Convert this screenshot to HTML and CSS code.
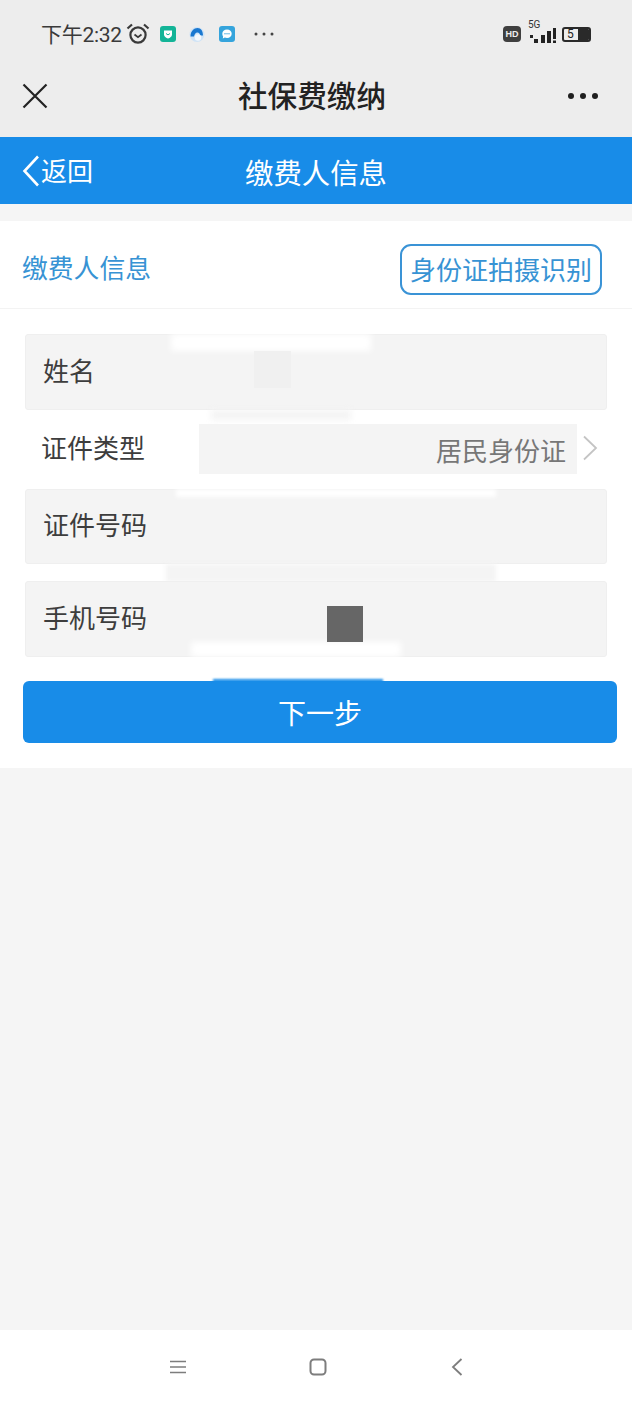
FILE: index.html
```html
<!DOCTYPE html>
<html lang="zh-CN">
<head>
<meta charset="utf-8">
<title>社保费缴纳</title>
<link rel="stylesheet" href="styles.css">
</head>
<body>
<div class="phone">
  <div class="top">
    <div class="status">
      <div class="status-left">
        <span class="time">下午2:32</span>
        <svg class="alarm" width="24" height="24" viewBox="0 0 24 24" fill="none" stroke="#3a3a3a"><circle cx="12" cy="13" r="7.6" stroke-width="2.2"/><path d="M8.5 12.5l3.5 2.6 3.5-2.6" stroke-width="1.8"/><path d="M1.5 6.5L6 2.5M22.500 6.500L18 2.500" stroke-width="2.2"/></svg>
        <svg class="app app-green" width="16" height="16" viewBox="0 0 16 16"><rect width="16" height="16" rx="3" fill="#13b497"/><path d="M4 4.500h8v4c0 2-2 3.400-4 4-2-.6-4-2-4-4z" fill="#fff"/><path d="M6 7.500l2 1.400 2-1.400" stroke="#13b497" stroke-width="1" fill="none"/></svg>
        <svg class="app app-blue" width="16" height="16" viewBox="0 0 16 16"><circle cx="8" cy="8.500" r="7.500" fill="#cfe3f6"/><path d="M1.500 10.500C1.500 5 5 2 8.500 2c3.500 0 5.500 3 5.500 7.500h-3C11 7.500 9.800 6.500 8.500 6.500 6.500 6.500 5.500 8.500 5 10.500z" fill="#1a78d0"/><circle cx="9" cy="11.500" r="3.200" fill="#f4f8fc"/></svg>
        <svg class="app app-chat" width="16" height="16" viewBox="0 0 16 16"><rect width="16" height="16" rx="3" fill="#35a4dc"/><path d="M8 3.500c2.800 0 4.700 1.800 4.700 4.200S10.800 12 8 12c-.8 0-1.500-.1-2.200-.4L3.800 12.500l.3-2C3.500 9.700 3.300 8.700 3.300 7.700 3.300 5.300 5.200 3.500 8 3.500z" fill="#fff"/><circle cx="6" cy="7.700" r=".7" fill="#35a4dc"/><circle cx="8" cy="7.700" r=".7" fill="#35a4dc"/><circle cx="10" cy="7.700" r=".7" fill="#35a4dc"/></svg>
        <svg class="more-small" width="20" height="4" viewBox="0 0 20 4" fill="#444"><circle cx="2" cy="2" r="1.500"/><circle cx="10" cy="2" r="1.500"/><circle cx="18" cy="2" r="1.500"/></svg>
      </div>
      <div class="status-right">
        <span class="hd">HD</span>
        <span class="signal">
          <span class="fiveg">5G</span>
          <svg width="28" height="17" viewBox="0 0 28 17" fill="#222"><rect x="1" y="8" width="3" height="3"/><rect x="5" y="12" width="4" height="4"/><rect x="12" y="8" width="4" height="8"/><rect x="18" y="4" width="4" height="12"/><rect x="24" y="1" width="3" height="11"/><rect x="24" y="13.500" width="3" height="2.500"/></svg>
        </span>
        <span class="battery"><span class="battery-num">5</span><span class="battery-fill"></span></span>
      </div>
    </div>
    <div class="navbar">
      <svg class="close" width="26" height="26" viewBox="0 0 26 26" stroke="#222" stroke-width="2.200"><path d="M1.500 1.500l23 23M24.500 1.500l-23 23"/></svg>
      <h1 class="nav-title">社保费缴纳</h1>
      <svg class="more" width="32" height="8" viewBox="0 0 32 8" fill="#1f1f1f"><circle cx="4" cy="4" r="3"/><circle cx="16" cy="4" r="3"/><circle cx="28" cy="4" r="3"/></svg>
    </div>
  </div>

  <div class="bluebar">
    <div class="back">
      <svg width="18" height="32" viewBox="0 0 18 32" fill="none" stroke="#fff" stroke-width="2.600"><path d="M16 1.500L2.500 16 16 30.500"/></svg>
      <span>返回</span>
    </div>
    <div class="bar-title">缴费人信息</div>
  </div>

  <main class="main">
    <section class="card">
      <div class="card-head">
        <span class="card-title">缴费人信息</span>
        <button class="scan">身份证拍摄识别</button>
      </div>
      <div class="form">
        <div class="field field-name">
          <span>姓名</span>
          <i class="patch patch-name-top"></i>
          <i class="patch patch-name-mark"></i>
          <i class="patch patch-name-bottom"></i>
        </div>
        <div class="row">
          <span class="row-label">证件类型</span>
          <div class="row-value">
            <span>居民身份证</span>
          </div>
          <svg class="chev" width="16" height="26" viewBox="0 0 16 26" fill="none" stroke="#c4c4c4" stroke-width="1.800"><path d="M2 1.500L14 13 2 24.500"/></svg>
        </div>
        <div class="field field-id">
          <span>证件号码</span>
          <i class="patch patch-id-top"></i>
          <i class="patch patch-id-bottom"></i>
        </div>
        <div class="field field-phone">
          <span>手机号码</span>
          <i class="patch patch-phone-mark"></i>
          <i class="patch patch-phone-bottom"></i>
        </div>
        <button class="next">下一步<i class="patch patch-next"></i></button>
      </div>
    </section>
  </main>

  <footer class="sysnav">
    <svg width="18" height="14" viewBox="0 0 18 14" stroke="#7d7d7d" stroke-width="1.700"><path d="M1 1.500h16M1 7h16M1 12.500h16"/></svg>
    <svg width="18" height="18" viewBox="0 0 18 18" fill="none" stroke="#7d7d7d" stroke-width="2"><rect x="1.500" y="1.500" width="15" height="15" rx="3.500"/></svg>
    <svg class="sys-back" width="12" height="18" viewBox="0 0 12 18" fill="none" stroke="#7d7d7d" stroke-width="1.800"><path d="M10.500 1L2 9l8.500 8"/></svg>
  </footer>
</div>
</body>
</html>
```

FILE: styles.css
```css
* { box-sizing: border-box; }
html, body { margin: 0; padding: 0; }
body { font-family: "Noto Sans CJK SC", "Noto Sans", sans-serif; background: #f5f5f5; }
.phone { width: 632px; height: 1405px; display: flex; flex-direction: column; overflow: hidden; }

.top { height: 137px; background: #ededed; display: flex; flex-direction: column; flex: none; }
.status { height: 68px; display: flex; justify-content: space-between; align-items: center; padding: 0 41px 0 41px; }
.status-left, .status-right { display: flex; align-items: center; }
.time { font-family: "Roboto", "Noto Sans CJK SC", sans-serif; font-size: 21px; line-height: 28px; margin-top: 1px; color: #3a3a3a; width: 85px; letter-spacing: -0.3px; white-space: nowrap; }
.app-green { margin-left: 10px; }
.app-blue { margin-left: 13px; }
.app-chat { margin-left: 14px; }
.more-small { margin-left: 19px; }
.status-right { margin-right: 2px; }
.hd { width: 18px; height: 16px; border-radius: 4px; background: #3f3f3f; color: #eee; font: 700 9px/16px "Liberation Sans", sans-serif; text-align: center; }
.signal { position: relative; width: 28px; height: 17px; margin-left: 8px; margin-top: 2px; }
.signal svg { display: block; }
.fiveg { position: absolute; left: -1px; top: -7px; font: 10px/10px "Roboto", sans-serif; color: #333; }
.battery { display: flex; width: 29px; height: 15px; margin-left: 5px; border: 2px solid #2a2a2a; border-radius: 3px; margin-right: -2px; overflow: hidden; }
.battery-num { font: 12px/11px "Roboto", sans-serif; color: #222; padding-left: 3px; width: 12px; }
.battery-fill { flex: 1; background: #2a2a2a; margin-left: 2px; }

.navbar { flex: 1; display: flex; align-items: center; justify-content: space-between; padding: 0 33px 14px 22px; position: relative; }
.nav-title { position: absolute; left: 0; width: 624px; top: 6px; margin: 0; text-align: center; font-size: 29.600px; line-height: 42px; font-weight: 500; color: #222; pointer-events: none; }
.close { display: block; margin-top: 1px; }
.more { display: block; }

.bluebar { height: 67px; background: #188ce8; flex: none; color: #fff; position: relative; display: flex; align-items: center; padding-left: 22px; }
.back { display: flex; align-items: center; font-size: 26px; line-height: 36px; color: #fff; margin-top: 2px; }
.back svg { display: block; margin-right: 1px; margin-top: -2px; }
.back span { margin-top: -3px; }
.bar-title { position: absolute; left: 0; width: 632px; text-align: center; top: 15px; font-size: 28.400px; line-height: 40px; }

.main { flex: 1; padding-top: 17px; }
.card { background: #fff; height: 547px; }
.card-head { height: 88px; border-bottom: 1px solid #f3f3f3; display: flex; align-items: center; justify-content: space-between; padding: 0 30px 0 22px; }
.card-title { font-size: 25.800px; line-height: 36px; color: #3793d4; margin-top: 4px; }
.scan { width: 202px; height: 51px; margin-top: 9px; padding: 0; border: 2px solid #3a93d6; border-radius: 11px; background: #fff; color: #3793d4; font: 400 26px/36px "Noto Sans CJK SC", sans-serif; }

.form { padding: 25px 15px 0 25px; position: relative; }
.field { width: 582px; background: #f4f4f4; border: 1px solid #efefef; border-radius: 3px; display: flex; align-items: center; padding-left: 17px; font-size: 26px; color: #3d3d3d; position: relative; }
.field-name { height: 76px; padding-bottom: 5px; }
.field-id { height: 75px; margin-top: 15px; padding-bottom: 6px; }
.field-phone { height: 76px; margin-top: 17px; padding-bottom: 5px; }

.row { height: 64px; display: flex; align-items: center; position: relative; padding-left: 16px; font-size: 26px; color: #3d3d3d; }
.row-label { margin-top: 8px; }
.row-value { position: absolute; left: 174px; top: 14px; width: 378px; height: 50px; background: #f4f4f4; display: flex; align-items: center; justify-content: flex-end; padding-right: 11px; color: #777; }
.chev { position: absolute; left: 557px; top: 25px; }

.next { display: block; position: relative; width: 594px; height: 62px; margin: 24px 0 0 -2px; border: 0; padding: 0; border-radius: 6px; background: #188ce8; color: #fff; font: 400 28px/40px "Noto Sans CJK SC", sans-serif; }

.patch { position: absolute; display: block; }
.patch-name-top { left: 145px; top: -1px; width: 200px; height: 17px; background: #fff; filter: blur(3px); }
.patch-name-mark { left: 228px; top: 16px; width: 37px; height: 37px; background: #f0f0f0; }
.patch-name-bottom { left: 185px; top: 75px; width: 140px; height: 10px; background: #f4f4f4; filter: blur(3px); }
.patch-id-top { left: 150px; top: -1px; width: 320px; height: 8px; background: #fff; filter: blur(2px); }
.patch-id-bottom { left: 140px; top: 74px; width: 330px; height: 18px; background: #f4f4f4; filter: blur(2px); }
.patch-phone-mark { left: 301px; top: 24px; width: 36px; height: 36px; background: #666; z-index: 1; }
.patch-phone-bottom { left: 165px; top: 60px; width: 210px; height: 15px; background: #fff; filter: blur(3px); }
.patch-next { left: 190px; top: -2px; width: 170px; height: 3px; background: #188ce8; filter: blur(1px); }

.sysnav { height: 75px; flex: none; background: #fff; display: flex; align-items: center; padding: 0 0 2px 169px; gap: 122px; }
.sysnav svg { display: block; }
.sys-back { margin-left: 2px; }
```
